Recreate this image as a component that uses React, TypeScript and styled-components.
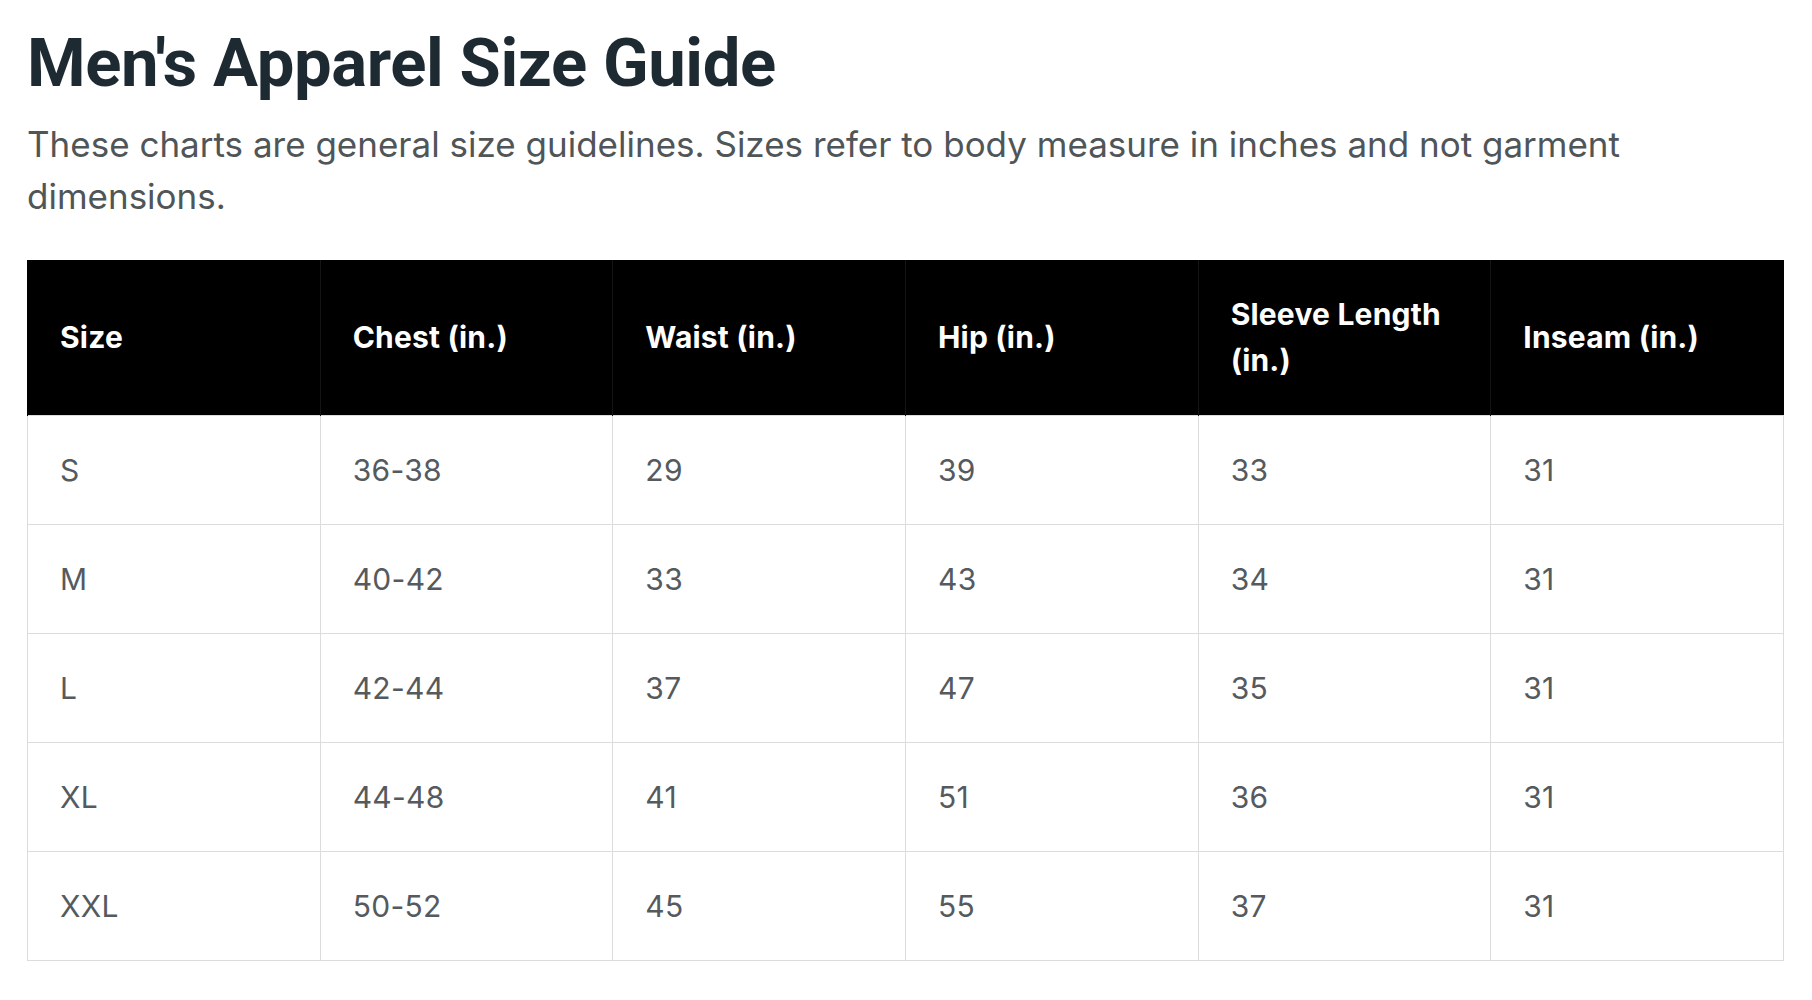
import styled, { createGlobalStyle } from 'styled-components'

const GlobalStyle = createGlobalStyle`
  body {
    margin: 0;
    background: #ffffff;
    font-family: Inter, "Noto Sans", sans-serif;
  }
`

const Page = styled.div`
  padding: 23px 28px 0 27px;
`

const Title = styled.h1`
  margin: 0;
  font-family: Roboto, "Liberation Sans", sans-serif;
  font-weight: 700;
  font-size: 67px;
  line-height: 80px;
  letter-spacing: -0.4px;
  color: #1e2a32;
`

const Intro = styled.p`
  margin: 15px 0 0;
  max-width: 1660px;
  font-family: Inter, "Noto Sans", sans-serif;
  font-size: 35px;
  line-height: 52px;
  letter-spacing: 0;
  color: #505558;
`

const Table = styled.table`
  width: 100%;
  margin-top: 38px;
  border-collapse: collapse;
  table-layout: fixed;
`

const HeadCell = styled.th`
  background: #000;
  color: #fff;
  text-align: left;
  vertical-align: middle;
  padding: 31px 32px;
  height: 155px;
  box-sizing: border-box;
  font-family: Inter, "Noto Sans", sans-serif;
  font-weight: 700;
  font-size: 30px;
  line-height: 46px;
  letter-spacing: 0.2px;
  border-left: 1px solid #141414;
  &:first-child {
    border-left: 1px solid #000;
  }
`

const Cell = styled.td`
  padding: 31px 32px;
  height: 109px;
  box-sizing: border-box;
  border: 1px solid #dcdcdc;
  font-family: Inter, "Noto Sans", sans-serif;
  font-size: 30px;
  line-height: 46px;
  letter-spacing: 0.3px;
  color: #555a5e;
  vertical-align: middle;
`

const headers = ['Size', 'Chest (in.)', 'Waist (in.)', 'Hip (in.)', 'Sleeve Length (in.)', 'Inseam (in.)']

const rows = [
  ['S', '36-38', '29', '39', '33', '31'],
  ['M', '40-42', '33', '43', '34', '31'],
  ['L', '42-44', '37', '47', '35', '31'],
  ['XL', '44-48', '41', '51', '36', '31'],
  ['XXL', '50-52', '45', '55', '37', '31'],
]

export default function App() {
  return (
    <>
      <GlobalStyle />
      <Page>
        <Title>Men's Apparel Size Guide</Title>
        <Intro>
          These charts are general size guidelines. Sizes refer to body measure in inches and not garment dimensions.
        </Intro>
        <Table>
          <thead>
            <tr>
              {headers.map((h) => (
                <HeadCell key={h}>{h}</HeadCell>
              ))}
            </tr>
          </thead>
          <tbody>
            {rows.map((r) => (
              <tr key={r[0]}>
                {r.map((v, i) => (
                  <Cell key={i}>{v}</Cell>
                ))}
              </tr>
            ))}
          </tbody>
        </Table>
      </Page>
    </>
  )
}
